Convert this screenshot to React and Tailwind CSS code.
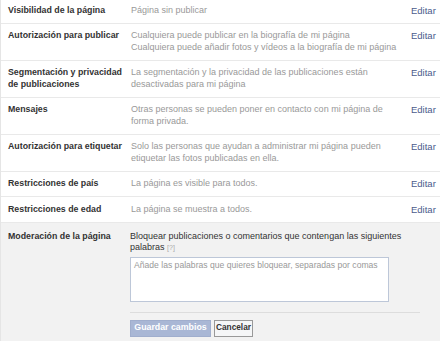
import React from 'react';

const rows = [
    { label: 'Visibilidad de la página', value: 'Página sin publicar', first: true },
    { label: 'Autorización para publicar', value: ['Cualquiera puede publicar en la biografía de mi página', 'Cualquiera puede añadir fotos y vídeos a la biografía de mi página'] },
    { label: 'Segmentación y privacidad de publicaciones', value: 'La segmentación y la privacidad de las publicaciones están desactivadas para mi página' },
    { label: 'Mensajes', value: 'Otras personas se pueden poner en contacto con mi página de forma privada.' },
    { label: 'Autorización para etiquetar', value: 'Solo las personas que ayudan a administrar mi página pueden etiquetar las fotos publicadas en ella.' },
    { label: 'Restricciones de país', value: 'La página es visible para todos.' },
    { label: 'Restricciones de edad', value: 'La página se muestra a todos.' },
];

export default function App() {
    return (
        <div className="w-[440px] h-[341px] overflow-hidden bg-white font-['Liberation_Sans',Arial,sans-serif] text-[9px] leading-[11.5px] border-l border-[#e5e5e5]">
            {rows.map((row) => (
                <div key={row.label} className={`flex border-b border-[#e9e9e9] ${row.first ? 'pt-[5px] pb-[6px]' : 'py-[6.5px]'}`}>
                    <div className="w-[130px] shrink-0 pl-[7px] pr-[3px] font-bold text-[8.8px] text-[#333]">{row.label}</div>
                    <div className="w-[266px] shrink-0 text-[#999]">
                        {Array.isArray(row.value) ? row.value.map((v) => <div key={v}>{v}</div>) : row.value}
                    </div>
                    <a className="ml-[14px] text-[9.5px] text-[#4b5b8c]">Editar</a>
                </div>
            ))}

            {/* Moderación */}
            <div className="flex bg-[#f2f2f2] pt-[8px] h-full">
                <div className="w-[129px] shrink-0 pl-[7px] font-bold text-[8.8px] text-[#333]">Moderación de la página</div>
                <div className="w-[290px] shrink-0">
                    <div className="text-[#333] leading-[11px] w-[275px]">
                        Bloquear publicaciones o comentarios que contengan las siguientes palabras{' '}
                        <span className="inline-block text-[#aaa] text-[7px] leading-[11px]">[?]</span>
                    </div>
                    <textarea
                        className="mt-[4px] block w-[259px] h-[45px] resize-none border border-[#bdc7d8] bg-white px-[3px] py-[2px] text-[8.6px] leading-[11.5px] outline-none placeholder:text-[#999]"
                        placeholder="Añade las palabras que quieres bloquear, separadas por comas"
                    />
                    <div className="mt-[10px] border-t border-[#ddd]" />
                    <div className="flex gap-[3px] pt-[7px]">
                        <button className="h-[17px] w-[81px] bg-[#a9b7d5] border border-[#a0aecd] text-white font-bold text-[8.8px]">Guardar cambios</button>
                        <button className="h-[17px] w-[39px] bg-[#f5f6f7] border border-[#999] text-[#333] font-bold text-[8.3px]">Cancelar</button>
                    </div>
                </div>
            </div>
        </div>
    );
}
